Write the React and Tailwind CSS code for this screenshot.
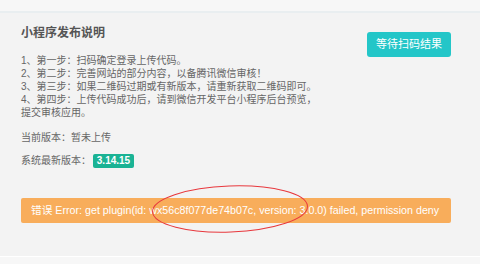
import React from "react";

export default function App() {
  const steps = [
    "1、第一步：扫码确定登录上传代码。",
    "2、第二步：完善网站的部分内容，以备腾讯微信审核！",
    "3、第三步：如果二维码过期或有新版本，请重新获取二维码即可。",
    "4、第四步：上传代码成功后，请到微信开发平台小程序后台预览，提交审核应用。",
  ];

  return (
    <div
      className="w-[480px] h-[264px] bg-[#f7f7f7] flex flex-col overflow-hidden"
      style={{ fontFamily: '"Liberation Sans", "Noto Sans CJK SC", sans-serif' }}
    >
      <div className="h-[13px] shrink-0 border-b-2 border-[#e9eef0]" />
      <div className="relative bg-[#f3f3f3] h-[244px] shrink-0 border-b border-white px-[21px] pt-[14px]">
        <div className="flex items-start justify-between">
          <p className="mt-[-1px] text-[12px] font-bold text-[#555] leading-[14px]">
            小程序发布说明
          </p>
          <button className="mt-[5px] mr-[8px] w-[84px] h-[25px] bg-[#23c6c8] rounded-[3px] text-white text-[11px]">
            等待扫码结果
          </button>
        </div>

        <div className="mt-[-3px] w-[300px] text-[10px] leading-[13px] text-[#666]">
          {steps.map((s) => (
            <p key={s}>{s}</p>
          ))}
        </div>

        <p className="mt-[12px] text-[10px] leading-[14px] text-[#666]">
          当前版本：暂未上传
        </p>
        <div className="mt-[8px] flex items-center gap-[2px] text-[10px] text-[#666]">
          <span>系统最新版本：</span>
          <span className="bg-[#1ab394] text-white font-bold text-[10px] w-[41px] text-center leading-[14px] rounded-[2px]">
            3.14.15
          </span>
        </div>

        <div className="mt-[30px] w-[430px] h-[25px] bg-[#f8ad5b] rounded-[2px] flex items-center pl-[10px] text-[10.7px] text-white whitespace-nowrap">
          错误 Error: get plugin(id: wx56c8f077de74b07c, version: 3.0.0) failed, permission deny
        </div>

        <svg
          className="absolute left-[149px] top-[170px]"
          width="162"
          height="52"
          viewBox="0 0 162 52"
        >
          <ellipse
            cx="81"
            cy="26"
            rx="77.5"
            ry="23"
            transform="rotate(-2 81 26)"
            fill="none"
            stroke="#e8383d"
            strokeWidth="1"
          />
        </svg>
      </div>
    </div>
  );
}
